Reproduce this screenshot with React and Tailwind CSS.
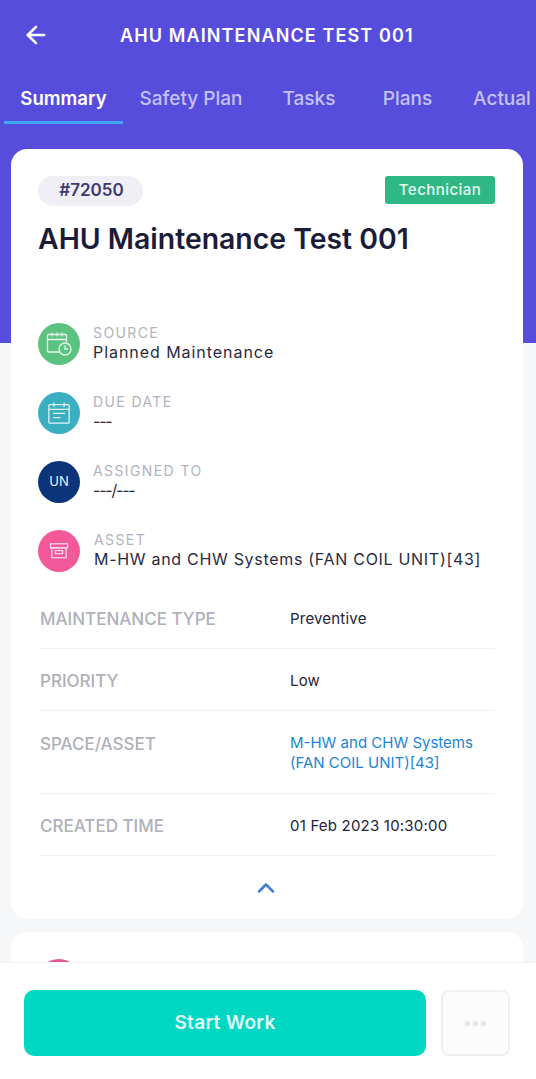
import React from "react";
import { ArrowLeft, ChevronUp } from "lucide-react";

const tabs = [
  { label: "Summary", width: "w-[119px]", active: true },
  { label: "Safety Plan", width: "w-[136px]" },
  { label: "Tasks", width: "w-[100px]" },
  { label: "Plans", width: "w-[97px]" },
  { label: "Actual", width: "w-[92px]" },
];

function SourceIcon() {
  return (
    <svg width="28" height="28" viewBox="0 0 28 28" fill="none" stroke="#e4f7e8" strokeWidth="1.3">
      <path d="M14 22H3.5a1 1 0 0 1-1-1V5.5a1 1 0 0 1 1-1h17a1 1 0 0 1 1 1V12" />
      <path d="M2.5 9.5h19M7 2.5v4M12 2.5v4M17 2.5v4" />
      <circle cx="20" cy="19" r="6" />
      <path d="M20 15.5V19h3" />
    </svg>
  );
}

function DueIcon() {
  return (
    <svg width="24" height="24" viewBox="0 0 26 26" fill="none" stroke="#dff4f7" strokeWidth="1.4">
      <rect x="2" y="4" width="22" height="20" rx="1" />
      <path d="M2 9h22M7.5 1.5v5M18.5 1.5v5M6.5 13.5h13M6.5 18h8" />
    </svg>
  );
}

function AssetIcon() {
  return (
    <svg width="20" height="18" viewBox="0 0 22 20" fill="none" stroke="#fde3ee" strokeWidth="1.3">
      <rect x="1.5" y="2" width="19" height="4.5" />
      <rect x="3" y="6.5" width="16" height="11" />
      <rect x="7" y="9.5" width="8" height="3.5" />
    </svg>
  );
}

const infoRows = [
  {
    label: "SOURCE",
    value: "Planned Maintenance",
    bg: "bg-[#5cc280]",
    icon: <SourceIcon />,
    h: "h-[69px]",
    track: "tracking-[0.95px]",
  },
  {
    label: "DUE DATE",
    value: "---",
    bg: "bg-[#39afc1]",
    icon: <DueIcon />,
    h: "h-[69px]",
    track: "tracking-[-1.2px]",
  },
  {
    label: "ASSIGNED TO",
    value: "---/---",
    bg: "bg-[#0c3478]",
    icon: <span className="text-[13px] text-[#eef2fa]">UN</span>,
    h: "h-[69px]",
    track: "tracking-[-1.2px]",
  },
  {
    label: "ASSET",
    value: "M-HW and CHW Systems (FAN COIL UNIT)[43]",
    bg: "bg-[#f3589a]",
    icon: <AssetIcon />,
    h: "h-[42px]",
    shift: "pl-[1px]",
    track: "tracking-[0.7px]",
  },
];

const details = [
  { label: "MAINTENANCE TYPE", value: "Preventive", h: "h-[62px] items-center" },
  { label: "PRIORITY", value: "Low", h: "h-[62px] items-center" },
  {
    label: "SPACE/ASSET",
    value: "M-HW and CHW Systems (FAN COIL UNIT)[43]",
    h: "h-[83px] items-start pt-[22px]",
    link: true,
  },
  { label: "CREATED TIME", value: "01 Feb 2023 10:30:00", h: "h-[62px] items-center" },
];

export default function App() {
  return (
    <div className="h-[1079px] w-[536px] flex flex-col overflow-hidden bg-[#f6f7f9] font-['Inter','Liberation_Sans',sans-serif]">
      <div className="flex-1 overflow-hidden">
        <div className="h-[343px] bg-[#574ddd]">
          <div className="flex h-[70px] items-center pl-[22px]">
            <ArrowLeft size={28} color="#ffffff" strokeWidth={2.2} />
            <h1 className="ml-[70px] whitespace-nowrap text-[18px] font-semibold tracking-[1.12px] text-white">
              AHU MAINTENANCE TEST 001
            </h1>
          </div>
          <div className="flex pl-[4px] overflow-hidden">
            {tabs.map((tab) => (
              <div
                key={tab.label}
                className={`${tab.width} shrink-0 h-[54px] pt-[7px] flex items-center justify-center border-b-[3px] ${
                  tab.active
                    ? "border-[#3fa9f5] text-[18.6px] font-semibold text-white"
                    : "border-transparent text-[19px] font-medium text-[#c5c1f4]"
                }`}
              >
                {tab.label}
              </div>
            ))}
          </div>
        </div>

        <div className="-mt-[194px] ml-[11px] mr-[13px] h-[770px] rounded-[16px] bg-white pl-[27px] pr-[28px] pt-[27px]">
          <div className="flex items-start justify-between">
            <span className="flex h-[30px] w-[105px] items-center justify-center rounded-full bg-[#efeff5] pl-[2px] text-[17px] font-semibold text-[#3f3a73]">
              #72050
            </span>
            <span className="flex h-[28px] w-[110px] items-center justify-center rounded-[3px] bg-[#2fb886] text-[15px] font-medium tracking-[0.45px] text-[#e6f8f1]">
              Technician
            </span>
          </div>
          <h2 className="mt-[14px] h-[82px] whitespace-nowrap text-[28.4px] font-semibold leading-[38px] text-[#1b1b3a]">
            AHU Maintenance Test 001
          </h2>

          <div className="mt-[21px]">
            {infoRows.map((row) => (
              <div key={row.label} className={`flex items-start ${row.h}`}>
                <div className={`flex h-[42px] w-[42px] shrink-0 items-center justify-center rounded-full ${row.bg}`}>
                  {row.icon}
                </div>
                <div className={`ml-[13px] pt-[1px] ${row.shift || ""}`}>
                  <p className="text-[14px] leading-[18px] tracking-[1.4px] text-[#b1b3bd]">{row.label}</p>
                  <p className={`whitespace-nowrap text-[16px] leading-[21px] text-[#2a2b40] ${row.track}`}>{row.value}</p>
                </div>
              </div>
            ))}
          </div>

          <div className="mt-[15px] ml-[2px] w-[455px]">
            {details.map((d) => (
              <div key={d.label} className={`flex border-b border-[#f0f1f4] ${d.h}`}>
                <span className={`w-[250px] shrink-0 text-[17px] font-medium leading-[21px] text-[#aeb0ba] ${d.link ? "pt-[1px]" : "pt-[4px]"}`}>
                  {d.label}
                </span>
                <span
                  className={`text-[15px] ${
                    d.link
                      ? "w-[195px] leading-[20px] text-[#1c84d6]"
                      : "pt-[2px] leading-[21px] tracking-[0.2px] text-[#22233a]"
                  }`}
                >
                  {d.value}
                </span>
              </div>
            ))}
          </div>

          <div className="mt-[18px] flex justify-center pr-[2px]">
            <ChevronUp size={28} color="#3f7fd6" strokeWidth={2.2} />
          </div>
        </div>

        <div className="ml-[11px] mr-[13px] mt-[13px] h-[60px] rounded-t-[16px] bg-white px-[27px] pt-[27px]">
          <div className="h-[42px] w-[42px] rounded-full bg-[#e5588f]" />
        </div>
      </div>

      <div className="flex h-[117px] shrink-0 gap-[15px] border-t border-[#f3f4f6] bg-white pl-[24px] pt-[27px]">
        <button className="h-[66px] w-[402px] rounded-[10px] bg-[#00d8c3] text-[19px] font-semibold tracking-[0.3px] text-[#e3fbf8]">
          Start Work
        </button>
        <button className="flex h-[66px] w-[69px] items-center justify-center gap-[3px] rounded-[8px] border-2 border-[#eef0f4] bg-[#fcfcfd]">
          <span className="h-[5px] w-[5px] rounded-full bg-[#e3e5ea]" />
          <span className="h-[5px] w-[5px] rounded-full bg-[#e3e5ea]" />
          <span className="h-[5px] w-[5px] rounded-full bg-[#e3e5ea]" />
        </button>
      </div>
    </div>
  );
}
